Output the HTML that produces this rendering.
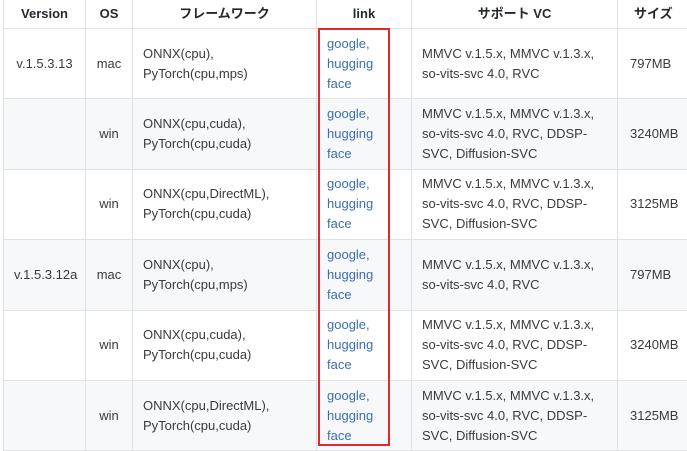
<!DOCTYPE html>
<html><head><meta charset="utf-8"><style>
body{margin:0;background:#fff;width:687px;height:450px;overflow:hidden;position:relative;font-family:"Liberation Sans","Noto Sans CJK JP",sans-serif;font-size:13px;color:#3a3a3a;}
table{position:absolute;left:3px;top:-1px;border-collapse:collapse;table-layout:fixed;width:694px;}
td,th{border:1px solid #dfe2e5;padding:0 10px;line-height:20px;vertical-align:middle;}
th{height:28px;font-weight:bold;text-align:center;color:#24292e;}
td{height:69.4px;}
tr:nth-child(odd) td{background:#f6f8fa;}
.c{text-align:center}
a{color:#3d6cb5;text-decoration:none}
.box{position:absolute;left:318px;top:28px;width:68px;height:414px;border:2px solid #e0282e;}
.s{padding-left:12px}
</style></head><body>
<table>
<colgroup><col style="width:82px"><col style="width:47px"><col style="width:184px"><col style="width:95px"><col style="width:206px"><col style="width:80px"></colgroup>
<tr><th>Version</th><th>OS</th><th>フレームワーク</th><th>link</th><th>サポート VC</th><th style="text-align:left;padding-left:16px">サイズ</th></tr>
<tr><td class="c">v.1.5.3.13</td><td class="c">mac</td><td>ONNX(cpu),<br>PyTorch(cpu,mps)</td><td><a>google,<br>hugging<br>face</a></td><td>MMVC v.1.5.x, MMVC v.1.3.x,<br>so-vits-svc 4.0, RVC</td><td class="s">797MB</td></tr>
<tr><td></td><td class="c">win</td><td>ONNX(cpu,cuda),<br>PyTorch(cpu,cuda)</td><td><a>google,<br>hugging<br>face</a></td><td>MMVC v.1.5.x, MMVC v.1.3.x,<br>so-vits-svc 4.0, RVC, DDSP-<br>SVC, Diffusion-SVC</td><td class="s">3240MB</td></tr>
<tr><td></td><td class="c">win</td><td>ONNX(cpu,DirectML),<br>PyTorch(cpu,cuda)</td><td><a>google,<br>hugging<br>face</a></td><td>MMVC v.1.5.x, MMVC v.1.3.x,<br>so-vits-svc 4.0, RVC, DDSP-<br>SVC, Diffusion-SVC</td><td class="s">3125MB</td></tr>
<tr><td class="c">v.1.5.3.12a</td><td class="c">mac</td><td>ONNX(cpu),<br>PyTorch(cpu,mps)</td><td><a>google,<br>hugging<br>face</a></td><td>MMVC v.1.5.x, MMVC v.1.3.x,<br>so-vits-svc 4.0, RVC</td><td class="s">797MB</td></tr>
<tr><td></td><td class="c">win</td><td>ONNX(cpu,cuda),<br>PyTorch(cpu,cuda)</td><td><a>google,<br>hugging<br>face</a></td><td>MMVC v.1.5.x, MMVC v.1.3.x,<br>so-vits-svc 4.0, RVC, DDSP-<br>SVC, Diffusion-SVC</td><td class="s">3240MB</td></tr>
<tr><td></td><td class="c">win</td><td>ONNX(cpu,DirectML),<br>PyTorch(cpu,cuda)</td><td><a>google,<br>hugging<br>face</a></td><td>MMVC v.1.5.x, MMVC v.1.3.x,<br>so-vits-svc 4.0, RVC, DDSP-<br>SVC, Diffusion-SVC</td><td class="s">3125MB</td></tr>
</table>
<div class="box"></div>
</body></html>
